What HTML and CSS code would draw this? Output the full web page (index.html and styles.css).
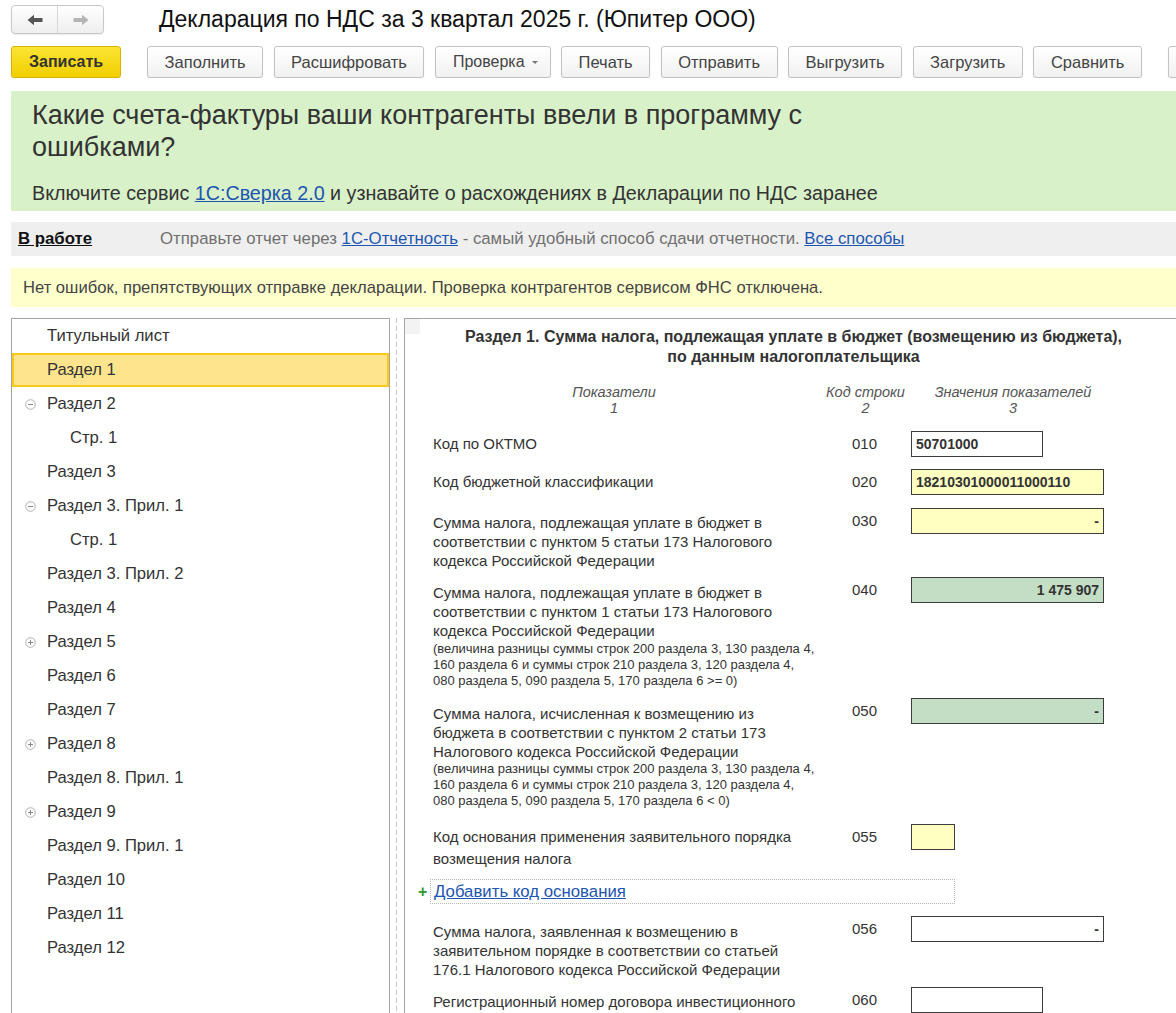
FILE: index.html
```html
<!DOCTYPE html>
<html lang="ru">
<head>
<meta charset="utf-8">
<title>Декларация по НДС</title>
<link rel="stylesheet" href="styles.css">
</head>
<body>
<div class="header">
  <div class="nav">
    <span class="nav-btn"><svg width="16" height="12" viewBox="0 0 16 12"><path d="M0.5 6 L7 0.8 V4 H15.5 V8 H7 V11.2 Z" fill="#555"/></svg></span>
    <span class="nav-btn"><svg width="16" height="12" viewBox="0 0 16 12"><path d="M15.5 6 L9 0.8 V4 H0.5 V8 H9 V11.2 Z" fill="#b4b4b4"/></svg></span>
  </div>
  <h1 class="title">Декларация по НДС за 3 квартал 2025 г. (Юпитер ООО)</h1>
</div>

<div class="toolbar">
  <button class="btn btn-primary">Записать</button>
  <button class="btn">Заполнить</button>
  <button class="btn">Расшифровать</button>
  <button class="btn btn-menu">Проверка<span class="caret"></span></button>
  <button class="btn">Печать</button>
  <button class="btn">Отправить</button>
  <button class="btn">Выгрузить</button>
  <button class="btn">Загрузить</button>
  <button class="btn">Сравнить</button>
  <button class="btn btn-last" title="Ещё" aria-label="Ещё"></button>
</div>

<div class="promo">
  <div class="promo-title">Какие счета-фактуры ваши контрагенты ввели в программу с<br>ошибками?</div>
  <div class="promo-text">Включите сервис <a class="link" href="#">1С:Сверка 2.0</a> и узнавайте о расхождениях в Декларации по НДС заранее</div>
</div>

<div class="status">
  <a class="status-state" href="#">В работе</a>
  <span class="status-msg">Отправьте отчет через <a class="link" href="#">1С-Отчетность</a> - самый удобный способ сдачи отчетности. <a class="link" href="#">Все способы</a></span>
</div>

<div class="notice">Нет ошибок, препятствующих отправке декларации. Проверка контрагентов сервисом ФНС отключена.</div>

<div class="main">
  <div class="tree">
    <div class="tree-row"><span class="exp"></span>Титульный лист</div>
    <div class="tree-row selected"><span class="exp"></span>Раздел 1</div>
    <div class="tree-row"><span class="exp"><svg width="11" height="11" viewBox="0 0 11 11"><circle cx="5.5" cy="5.5" r="4.8" fill="#fff" stroke="#b0b0b0"/><path d="M3 5.5 H8" stroke="#888"/></svg></span>Раздел 2</div>
    <div class="tree-row sub"><span class="exp"></span>Стр. 1</div>
    <div class="tree-row"><span class="exp"></span>Раздел 3</div>
    <div class="tree-row"><span class="exp"><svg width="11" height="11" viewBox="0 0 11 11"><circle cx="5.5" cy="5.5" r="4.8" fill="#fff" stroke="#b0b0b0"/><path d="M3 5.5 H8" stroke="#888"/></svg></span>Раздел 3. Прил. 1</div>
    <div class="tree-row sub"><span class="exp"></span>Стр. 1</div>
    <div class="tree-row"><span class="exp"></span>Раздел 3. Прил. 2</div>
    <div class="tree-row"><span class="exp"></span>Раздел 4</div>
    <div class="tree-row"><span class="exp"><svg width="11" height="11" viewBox="0 0 11 11"><circle cx="5.5" cy="5.5" r="4.8" fill="#fff" stroke="#b0b0b0"/><path d="M3 5.5 H8 M5.5 3 V8" stroke="#888"/></svg></span>Раздел 5</div>
    <div class="tree-row"><span class="exp"></span>Раздел 6</div>
    <div class="tree-row"><span class="exp"></span>Раздел 7</div>
    <div class="tree-row"><span class="exp"><svg width="11" height="11" viewBox="0 0 11 11"><circle cx="5.5" cy="5.5" r="4.8" fill="#fff" stroke="#b0b0b0"/><path d="M3 5.5 H8 M5.5 3 V8" stroke="#888"/></svg></span>Раздел 8</div>
    <div class="tree-row"><span class="exp"></span>Раздел 8. Прил. 1</div>
    <div class="tree-row"><span class="exp"><svg width="11" height="11" viewBox="0 0 11 11"><circle cx="5.5" cy="5.5" r="4.8" fill="#fff" stroke="#b0b0b0"/><path d="M3 5.5 H8 M5.5 3 V8" stroke="#888"/></svg></span>Раздел 9</div>
    <div class="tree-row"><span class="exp"></span>Раздел 9. Прил. 1</div>
    <div class="tree-row"><span class="exp"></span>Раздел 10</div>
    <div class="tree-row"><span class="exp"></span>Раздел 11</div>
    <div class="tree-row"><span class="exp"></span>Раздел 12</div>
  </div>

  <div class="splitter"></div>

  <div class="form">
    <div class="corner"></div>
    <div class="form-title">Раздел 1. Сумма налога, подлежащая уплате в бюджет (возмещению из бюджета),<br>по данным налогоплательщика</div>
    <div class="cols">
      <div>Показатели<br>1</div>
      <div></div>
      <div>Код строки<br>2</div>
      <div>Значения показателей<br>3</div>
    </div>

    <div class="row r010">
      <div class="label">Код по ОКТМО</div>
      <div class="code">010</div>
      <div class="field w-short">50701000</div>
    </div>

    <div class="row r020">
      <div class="label">Код бюджетной классификации</div>
      <div class="code">020</div>
      <div class="field w-long yellow">18210301000011000110</div>
    </div>

    <div class="row r030">
      <div class="label">Сумма налога, подлежащая уплате в бюджет в<br>соответствии с пунктом 5 статьи 173 Налогового<br>кодекса Российской Федерации</div>
      <div class="code">030</div>
      <div class="field w-long yellow num">-</div>
    </div>

    <div class="row r040">
      <div class="label">Сумма налога, подлежащая уплате в бюджет в<br>соответствии с пунктом 1 статьи 173 Налогового<br>кодекса Российской Федерации
        <div class="note">(величина разницы суммы строк 200 раздела 3, 130 раздела 4,<br>160 раздела 6 и суммы строк 210 раздела 3, 120 раздела 4,<br>080 раздела 5, 090 раздела 5, 170 раздела 6 &gt;= 0)</div>
      </div>
      <div class="code">040</div>
      <div class="field w-long green num">1 475 907</div>
    </div>

    <div class="row r050">
      <div class="label">Сумма налога, исчисленная к возмещению из<br>бюджета в соответствии с пунктом 2 статьи 173<br>Налогового кодекса Российской Федерации
        <div class="note">(величина разницы суммы строк 200 раздела 3, 130 раздела 4,<br>160 раздела 6 и суммы строк 210 раздела 3, 120 раздела 4,<br>080 раздела 5, 090 раздела 5, 170 раздела 6 &lt; 0)</div>
      </div>
      <div class="code">050</div>
      <div class="field w-long green num">-</div>
    </div>

    <div class="row r055">
      <div class="label">Код основания применения заявительного порядка<br>возмещения налога</div>
      <div class="code">055</div>
      <div class="field w-tiny yellow"></div>
    </div>

    <div class="add-row">
      <span class="plus">+</span>
      <div class="add-box"><a class="link" href="#">Добавить код основания</a></div>
    </div>

    <div class="row r056">
      <div class="label">Сумма налога, заявленная к возмещению в<br>заявительном порядке в соответствии со статьей<br>176.1 Налогового кодекса Российской Федерации</div>
      <div class="code">056</div>
      <div class="field w-long num">-</div>
    </div>

    <div class="row r060">
      <div class="label">Регистрационный номер договора инвестиционного<br>товарищества</div>
      <div class="code">060</div>
      <div class="field w-short"></div>
    </div>
  </div>
</div>
</body>
</html>
```

FILE: styles.css
```css
html, body {
  margin: 0;
  padding: 0;
}

body {
  width: 1176px;
  height: 1013px;
  overflow: hidden;
  background: #fff;
  color: #333;
  font-family: "Liberation Sans", Arial, sans-serif;
}

/* Header */
.header {
  display: flex;
  align-items: flex-start;
  height: 40px;
  padding-left: 11px;
}

.nav {
  display: flex;
  margin-top: 5px;
  height: 29px;
  box-sizing: border-box;
  border: 1px solid #c8c8c8;
  border-radius: 4px;
  background: linear-gradient(#ffffff, #eeeeee);
  box-shadow: 0 1px 1px rgba(0, 0, 0, 0.08);
}

.nav-btn {
  width: 45px;
  display: flex;
  align-items: center;
  justify-content: center;
}

.nav-btn + .nav-btn {
  border-left: 1px solid #d6d6d6;
}

.title {
  margin: 0 0 0 55px;
  font-size: 23px;
  font-weight: normal;
  line-height: 38px;
  color: #111;
  white-space: nowrap;
}

/* Toolbar */
.toolbar {
  display: flex;
  gap: 10.5px;
  padding: 6px 0 0 11px;
  height: 32px;
  white-space: nowrap;
  overflow: hidden;
}

.btn {
  flex: none;
  height: 32px;
  box-sizing: border-box;
  padding: 0 16.5px;
  border: 1px solid #c2c2c2;
  border-radius: 3px;
  background: linear-gradient(#ffffff, #f1f1f1);
  box-shadow: 0 1px 1px rgba(0, 0, 0, 0.12);
  font-family: "Liberation Sans", Arial, sans-serif;
  font-size: 16.5px;
  color: #444;
}

.btn-primary {
  background: linear-gradient(#fbe434, #f2cf00);
  border-color: #d8b300;
  font-weight: bold;
  color: #333;
  margin-right: 15.5px;
  font-size: 16px;
  padding: 0 17px;
}

.btn-menu {
  padding: 0 12px 0 17px;
  font-size: 16px;
}

.btn-last {
  margin-left: 15.5px;
  width: 60px;
}

.caret {
  display: inline-block;
  width: 0;
  height: 0;
  margin-left: 7px;
  vertical-align: middle;
  border-left: 3px solid transparent;
  border-right: 3px solid transparent;
  border-top: 3px solid #777;
}

/* Promo banner */
.promo {
  margin: 13px 0 0 11px;
  height: 120px;
  box-sizing: border-box;
  padding: 8px 21px 0;
  background: #d9f1c9;
}

.promo-title {
  font-size: 27px;
  line-height: 32px;
  color: #333;
  white-space: nowrap;
}

.promo-text {
  margin-top: 18px;
  font-size: 19.7px;
  line-height: 24px;
  color: #333;
  white-space: nowrap;
}

.link {
  color: #1c56b0;
  text-decoration: underline;
}

/* Status */
.status {
  display: flex;
  align-items: center;
  margin: 11px 0 0 11px;
  height: 34px;
  padding-left: 7px;
  background: #efefef;
  font-size: 16.8px;
  white-space: nowrap;
}

.status-state {
  color: #111;
  font-weight: bold;
  text-decoration: underline;
  width: 142px;
}

.status-msg {
  color: #707070;
}

/* Notice */
.notice {
  margin: 12px 0 0 11px;
  height: 39px;
  line-height: 39px;
  padding-left: 12px;
  background: #ffffcc;
  font-size: 16.6px;
  color: #444;
  white-space: nowrap;
}

/* Main area */
.main {
  display: flex;
  margin-top: 11px;
  height: 720px;
}

.tree {
  flex: none;
  margin-left: 11px;
  width: 379px;
  box-sizing: border-box;
  border: 1px solid #a4a4a4;
  font-size: 16.6px;
  color: #333;
}

.tree-row {
  display: flex;
  align-items: center;
  height: 34px;
  box-sizing: border-box;
  white-space: nowrap;
}

.tree-row .exp {
  width: 35px;
  display: flex;
  justify-content: flex-end;
  box-sizing: border-box;
  flex: none;
}

.tree-row .exp svg {
  margin-right: 11px;
}

.tree-row.sub {
  padding-left: 23px;
}

.tree-row.selected {
  background: #fde48d;
  border: 2px solid #f9c81c;
}

.tree-row.selected .exp {
  width: 33px;
}

.splitter {
  flex: none;
  width: 14px;
  background-image: linear-gradient(#c8c8c8 60%, transparent 60%);
  background-size: 1px 8px;
  background-repeat: repeat-y;
  background-position: 6px 0;
}

.form {
  position: relative;
  flex: 1;
  border-left: 1px solid #a4a4a4;
  border-top: 1px solid #a4a4a4;
  padding-left: 28px;
  color: #333;
  font-size: 15px;
}

.corner {
  position: absolute;
  left: 0;
  top: 0;
  width: 15px;
  height: 15px;
  background: #f3f3f3;
}

.form-title {
  padding-top: 8px;
  width: 721px;
  text-align: center;
  font-weight: bold;
  font-size: 16px;
  line-height: 20px;
  color: #333;
}

.cols {
  display: grid;
  grid-template-columns: 362px 30px 81px 214px;
  margin-top: 17px;
  font-style: italic;
  font-size: 14.5px;
  line-height: 16px;
  color: #555;
  text-align: center;
}

.row {
  display: grid;
  grid-template-columns: 419px 59px 1fr;
  align-items: start;
  white-space: nowrap;
}

.label {
  line-height: 19px;
  padding-top: 4px;
}

.code {
  line-height: 19px;
  padding-top: 3px;
}

.note {
  margin-top: 1px;
  font-size: 13px;
  line-height: 16px;
}

.field {
  height: 26px;
  box-sizing: border-box;
  border: 1px solid #3c3c3c;
  padding: 0 4px;
  font-size: 14px;
  font-weight: bold;
  line-height: 24px;
  color: #333;
  background: #fff;
}

.field.num {
  text-align: right;
}

.w-short { width: 132px; }
.w-long { width: 193px; }
.w-tiny { width: 44px; }

.yellow { background: #ffffc2; }
.green { background: #c3dec4; }

.r010 { margin-top: 15px; }
.r010 .label { padding-top: 3px; }
.r020 { margin-top: 12px; }
.r020 .label { padding-top: 3px; }
.r030 { margin-top: 13px; }
.r030 .label { padding-top: 4.5px; }
.r040 { margin-top: 7.5px; }
.r040 .label { padding-top: 5.5px; }
.r050 { margin-top: 9px; }
.r050 .label { padding-top: 6.5px; }
.r050 .note { margin-top: 0; }
.r055 { margin-top: 15px; }
.r055 .label { padding-top: 2px; line-height: 22px; }
.r056 { margin-top: 12px; }
.r056 .label { padding-top: 5.5px; }
.r060 { margin-top: 8.5px; }
.r060 .label { padding-top: 4.5px; }

.add-row {
  display: flex;
  align-items: center;
  margin-top: 9px;
  margin-left: -15px;
}

.plus {
  width: 12px;
  color: #2e9a2e;
  font-weight: bold;
  font-size: 16px;
  line-height: 25px;
}

.add-box {
  width: 525px;
  height: 25px;
  box-sizing: border-box;
  border: 1px dotted #b8b8b8;
  padding-left: 3px;
  font-size: 16.8px;
  line-height: 23px;
}
```
